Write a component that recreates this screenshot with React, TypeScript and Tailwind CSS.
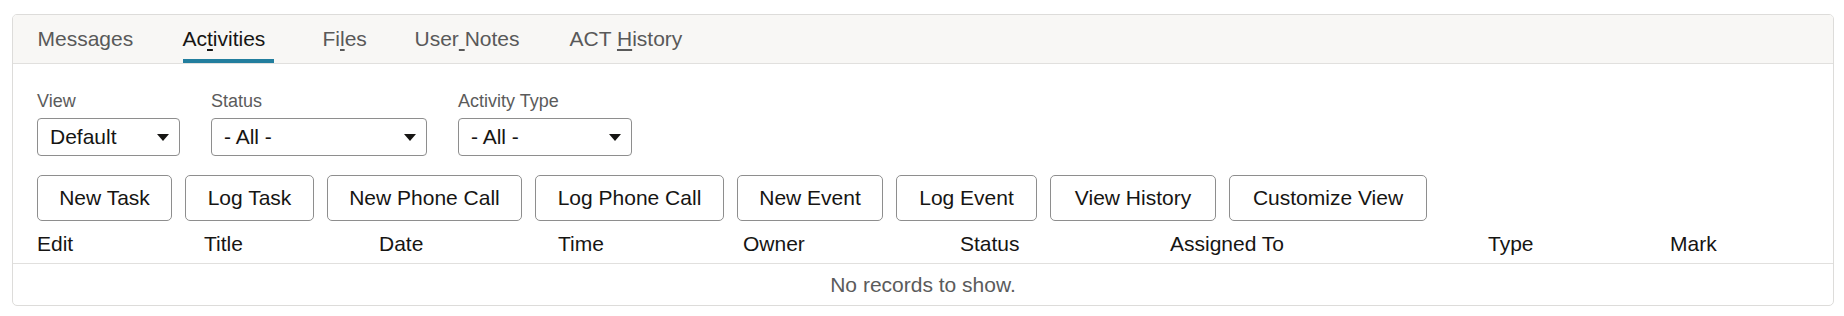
import type { ReactNode } from 'react';

type Tab = { key: string; label: ReactNode; width: string; active?: boolean };

const tabs: Tab[] = [
  { key: 'messages', label: 'Messages', width: 'w-[96px]' },
  {
    key: 'activities',
    label: (
      <>
        Ac<u className="underline-offset-[3px]">t</u>ivities
      </>
    ),
    width: 'w-[91px]',
    active: true,
  },
  {
    key: 'files',
    label: (
      <>
        Fi<u className="underline-offset-[3px]">l</u>es
      </>
    ),
    width: 'w-[43px]',
  },
  {
    key: 'notes',
    label: (
      <>
        User<u className="underline-offset-[3px]"> </u>Notes
      </>
    ),
    width: 'w-[106px]',
  },
  {
    key: 'history',
    label: (
      <>
        ACT <u className="underline-offset-[3px]">H</u>istory
      </>
    ),
    width: 'w-[117px]',
  },
];

const filters = [
  { label: 'View', value: 'Default', width: 'w-[143px]' },
  { label: 'Status', value: '- All -', width: 'w-[216px]' },
  { label: 'Activity Type', value: '- All -', width: 'w-[174px]' },
];

const actions = [
  { label: 'New Task', width: 'w-[135px]' },
  { label: 'Log Task', width: 'w-[129px]' },
  { label: 'New Phone Call', width: 'w-[195px]' },
  { label: 'Log Phone Call', width: 'w-[189px]' },
  { label: 'New Event', width: 'w-[146px]' },
  { label: 'Log Event', width: 'w-[141px]' },
  { label: 'View History', width: 'w-[166px]' },
  { label: 'Customize View', width: 'w-[198px]' },
];

const columns = ['Edit', 'Title', 'Date', 'Time', 'Owner', 'Status', 'Assigned To', 'Type', 'Mark'];

const Caret = () => (
  <svg width="12" height="7" viewBox="0 0 12 7" className="shrink-0">
    <polygon points="0,0 12,0 6,7" fill="#161513" />
  </svg>
);

export default function App() {
  return (
    <div className="min-h-[316px] bg-white font-['Liberation_Sans',Arial,sans-serif] pt-[14px] pl-[12px] pr-[10px]">
      <div className="rounded-[5px] border border-[#dddcda] bg-white overflow-hidden">
        {/* tab strip */}
        <div className="flex h-[49px] border-b border-[#e1e0de] bg-[#f8f7f5]">
          {tabs.map((tab) => (
            <div key={tab.key} className="relative flex h-full items-center px-[24.5px]">
              <span
                className={`${tab.width} whitespace-pre text-[21px] leading-[24px] pb-[1px] ${
                  tab.active ? 'text-[#161513]' : 'text-[#595959]'
                }`}
              >
                {tab.label}
              </span>
              {tab.active && (
                <div className="absolute bottom-0 left-[24.5px] right-[24.5px] h-[4px] bg-[#227e9e]" />
              )}
            </div>
          ))}
        </div>

        <div className="px-[24px] pt-[25px]">
          <div className="flex gap-[31px]">
            {filters.map((f) => (
              <div key={f.label} className="flex flex-col">
                <label className="text-[18px] leading-[24px] text-[#5b5b5b]">{f.label}</label>
                <div
                  className={`${f.width} mt-[5px] flex h-[38px] items-center justify-between rounded-[4px] border border-[#8e8e8e] bg-white pl-[12px] pr-[10px]`}
                >
                  <span className="text-[21px] leading-[24px] text-[#161513]">{f.value}</span>
                  <Caret />
                </div>
              </div>
            ))}
          </div>

          <div className="mt-[19px] flex gap-[13px]">
            {actions.map((a) => (
              <button
                key={a.label}
                type="button"
                className={`${a.width} flex h-[46px] items-center justify-center rounded-[5px] border border-[#8e8e8e] bg-white text-[21px] leading-[24px] text-[#161513]`}
              >
                {a.label}
              </button>
            ))}
          </div>
        </div>

        {/* table */}
        <div className="grid h-[42px] grid-cols-[167px_175px_179px_185px_217px_210px_318px_182px_1fr] items-center pl-[24px] pt-[3px]">
          {columns.map((c) => (
            <div key={c} className="text-[21px] leading-[24px] text-[#161513]">
              {c}
            </div>
          ))}
        </div>
        <div className="flex h-[42px] items-center justify-center border-t border-[#e1e0de]">
          <span className="text-[21px] leading-[24px] text-[#5b5b5b]">No records to show.</span>
        </div>
      </div>
    </div>
  );
}
